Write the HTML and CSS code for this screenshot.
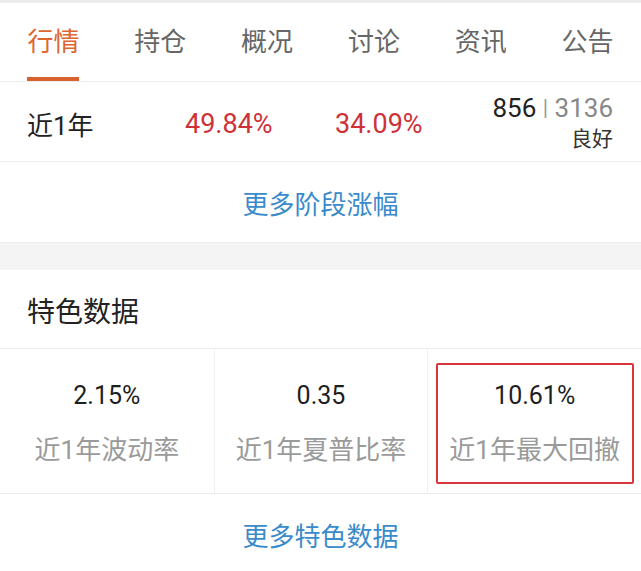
FILE: index.html
```html
<!DOCTYPE html>
<html lang="zh">
<head>
<meta charset="utf-8">
<link rel="stylesheet" href="styles.css">
</head>
<body>
<div class="page">
  <div class="topline"></div>
  <nav class="tabs">
    <div class="tab active"><span>行情</span></div>
    <div class="tab"><span>持仓</span></div>
    <div class="tab"><span>概况</span></div>
    <div class="tab"><span>讨论</span></div>
    <div class="tab"><span>资讯</span></div>
    <div class="tab"><span>公告</span></div>
  </nav>
  <div class="row-stat">
    <div class="period">近1年</div>
    <div class="pct pct1">49.84%</div>
    <div class="pct pct2">34.09%</div>
    <div class="rank">
      <div class="rank-num">856 <span class="sep">|</span> <span class="total">3136</span></div>
      <div class="rank-label">良好</div>
    </div>
  </div>
  <div class="more">更多阶段涨幅</div>
  <div class="band"></div>
  <div class="section-title">特色数据</div>
  <div class="grid">
    <div class="cell">
      <div class="val">2.15%</div>
      <div class="lbl">近1年波动率</div>
    </div>
    <div class="cell">
      <div class="val">0.35</div>
      <div class="lbl">近1年夏普比率</div>
    </div>
    <div class="cell marked">
      <div class="val">10.61%</div>
      <div class="lbl">近1年最大回撤</div>
    </div>
  </div>
  <div class="more more2">更多特色数据</div>
</div>
</body>
</html>
```
FILE: styles.css
```css
* { box-sizing: border-box; }
html, body { margin: 0; padding: 0; background: #fff; }
body {
  font-family: Roboto, "Noto Sans CJK SC", sans-serif;
  color: #222;
  width: 641px;
  height: 571px;
  overflow: hidden;
}
.page { width: 641px; }
.topline { height: 3px; background: #ececec; }
.tabs {
  display: grid;
  grid-template-columns: repeat(6, 1fr);
  height: 79px;
  border-bottom: 1px solid #ececec;
}
.tab {
  display: flex;
  justify-content: center;
  align-items: stretch;
  font-size: 26px;
  color: #666;
}
.tab span {
  display: flex;
  align-items: center;
  padding-top: 4px;
  padding-bottom: 1px;
  border-bottom: 4px solid transparent;
  line-height: 1;
}
.tab.active { color: #e0642f; }
.tab.active span { border-bottom-color: #d9612e; }
.row-stat {
  display: flex;
  align-items: center;
  height: 80px;
  padding: 0 28px 0 27px;
  border-bottom: 1px solid #ececec;
}
.period { font-size: 26px; width: 158px; padding-top: 4px; }
.pct { font-size: 27px; color: #cf3139; padding-top: 4px; }
.pct1 { width: 150px; }
.pct2 { flex: 1; }
.rank { text-align: right; padding-top: 3px; }
.rank-num { font-size: 26px; line-height: 30px; color: #222; }
.rank-num .sep { color: #999; font-size: 22px; position: relative; top: -2px; }
.rank-num .total { color: #888; }
.rank-label { font-size: 21px; line-height: 28px; color: #333; margin-top: 0; }
.more {
  height: 80px;
  display: flex;
  align-items: center;
  justify-content: center;
  font-size: 26px;
  color: #3a8bcb;
}
.band { height: 28px; background: #f4f4f4; border-top: 1px solid #eee; }
.section-title {
  height: 79px;
  display: flex;
  align-items: center;
  padding: 2px 27px 0;
  font-size: 28px;
  color: #222;
  border-bottom: 1px solid #ececec;
}
.grid {
  display: grid;
  grid-template-columns: repeat(3, 1fr);
  height: 145px;
  border-bottom: 1px solid #ececec;
}
.cell {
  position: relative;
  display: flex;
  flex-direction: column;
  align-items: center;
  padding-top: 30px;
}
.cell + .cell { border-left: 1px solid #f0f0f0; }
.val { font-size: 25px; line-height: 34px; color: #1e1e1e; }
.lbl { font-size: 26px; line-height: 34px; color: #9a9a9a; margin-top: 20px; }
.marked::after {
  content: "";
  position: absolute;
  left: 8px;
  right: 7px;
  top: 14px;
  bottom: 9px;
  border: 2px solid #d8363a;
  border-radius: 2px;
}
.more2 { height: 80px; }
```
